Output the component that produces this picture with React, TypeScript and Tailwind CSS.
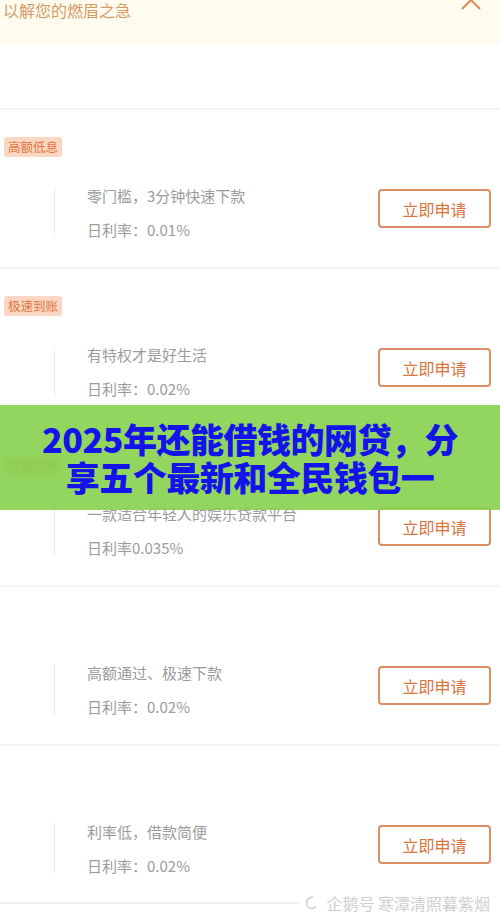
import React from "react";

type Loan = { tag?: string; desc: string; rate: string };

const loans: Loan[] = [
  { tag: "高额低息", desc: "零门槛，3分钟快速下款", rate: "日利率：0.01%" },
  { tag: "极速到账", desc: "有特权才是好生活", rate: "日利率：0.02%" },
  { tag: "极速到账", desc: "一款适合年轻人的娱乐贷款平台", rate: "日利率0.035%" },
  { desc: "高额通过、极速下款", rate: "日利率：0.02%" },
  { desc: "利率低，借款简便", rate: "日利率：0.02%" },
];

const LoanRow: React.FC<{ loan: Loan }> = ({ loan }) => (
  <div className="h-[159px] border-t-2 border-[#f4f4f4] flex flex-col">
    <div className="flex h-[47px] items-start pt-[27px] pl-[4px]">
      {loan.tag && (
        <span className="flex h-[20px] items-center rounded-[3px] bg-[#fbd6c2] px-[4px] text-[12.5px] leading-none text-[#e0763f]">
          {loan.tag}
        </span>
      )}
    </div>
    <div className="mt-[22px] flex items-start">
      <div className="ml-[54px] mt-[8px] h-[51px] w-px bg-[#ececec]" />
      <div className="ml-[32px] flex-1 text-[15px] leading-[34px] text-[#9b9b9b]">
        <p>{loan.desc}</p>
        <p>{loan.rate}</p>
      </div>
      <button className="mr-[9px] mt-[10px] flex h-[39px] w-[113px] items-center justify-center rounded-[4px] border-2 border-[#db8e63] text-[16px] text-[#d9743c]">
        立即申请
      </button>
    </div>
  </div>
);

export default function App() {
  return (
    <div
      className="relative h-[919px] w-[500px] overflow-hidden bg-white"
      style={{ fontFamily: '"Noto Sans CJK SC", "Noto Sans", sans-serif' }}
    >
      <div className="flex h-[44px] items-start justify-between bg-[#fffbee]">
        <span className="-mt-[3px] pl-[3px] text-[16px] leading-[26px] text-[#d69a66]">
          以解您的燃眉之急
        </span>
        <svg width="22" height="14" viewBox="0 0 22 14" className="mr-[18px] -mt-[3px]">
          <path d="M2 12 L11 3 L20 12" fill="none" stroke="#e08a50" strokeWidth="2" />
        </svg>
      </div>
      <div className="h-[64px]" />
      {loans.map((l, i) => (
        <LoanRow key={i} loan={l} />
      ))}
      <div className="-mt-[8px] flex h-[16px] items-center">
        <div className="h-[2px] flex-1 bg-[#f0f0f0]" />
        <div className="flex items-center gap-[8px] bg-white pl-[4px] pr-[10px] text-[16px] leading-none text-[#cfcfcf]">
          <svg width="14" height="16" viewBox="0 0 14 16">
            <path d="M9 2 C4 2 2 6 3 10 C4 13 7 14 10 13" fill="none" stroke="#cfcfcf" strokeWidth="1.6" />
            <circle cx="11" cy="12" r="1" fill="#cfcfcf" />
          </svg>
          <span>企鹅号 寒潭清照暮紫烟</span>
        </div>
      </div>

      <div className="absolute left-0 top-[405px] flex h-[105px] w-full flex-col items-center justify-center bg-[#86d24e]/90">
        <p className="text-center text-[34px] font-black leading-[38px] tracking-[-0.5px] text-[#1414ea]">
          2025年还能借钱的网贷，分
        </p>
        <p className="text-center text-[34px] font-black leading-[38px] tracking-[-0.5px] text-[#1414ea]">
          享五个最新和全民钱包一
        </p>
      </div>
    </div>
  );
}
